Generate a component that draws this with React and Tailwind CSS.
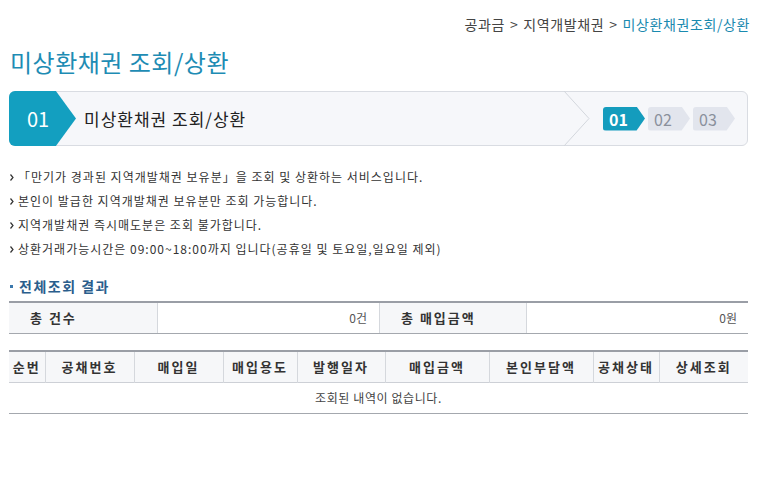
import React from 'react'

const font = { fontFamily: '"Noto Sans CJK KR", "Noto Sans", sans-serif' }

const notices = [
  '「만기가 경과된 지역개발채권 보유분」을 조회 및 상환하는 서비스입니다.',
  '본인이 발급한 지역개발채권 보유분만 조회 가능합니다.',
  '지역개발채권 즉시매도분은 조회 불가합니다.',
  '상환거래가능시간은 09:00~18:00까지 입니다(공휴일 및 토요일,일요일 제외)',
]

const columns = [
  { label: '순번', w: 'w-[36px]' },
  { label: '공채번호', w: 'w-[89px]' },
  { label: '매입일', w: 'w-[89px]' },
  { label: '매입용도', w: 'w-[74px]' },
  { label: '발행일자', w: 'w-[88px]' },
  { label: '매입금액', w: 'w-[104px]' },
  { label: '본인부담액', w: 'w-[104px]' },
  { label: '공채상태', w: 'w-[66px]' },
  { label: '상세조회', w: 'w-[89px]' },
]

const StepTag = ({ num, active }) => (
  <div
    className={`flex h-[24px] w-[42px] items-center pl-[6px] text-[16px] [clip-path:polygon(0_0,80%_0,100%_50%,80%_100%,0_100%)] rounded-l-[3px] ${
      active ? 'bg-[#149cbd] text-white font-semibold' : 'bg-[#e2e5ed] text-[#8a909c]'
    }`}
  >
    {num}
  </div>
)

export default function App() {
  return (
    <div className="w-[765px] min-h-[477px] bg-white pl-[9px] pr-[17px] text-[#333]" style={font}>
      {/* breadcrumb */}
      <div className="-mr-[2px] flex justify-end pt-[14px] text-[14px] leading-[20px] tracking-[0.6px] text-[#444]">
        <span>공과금</span>
        <span className="mx-[5px]">&gt;</span>
        <span>지역개발채권</span>
        <span className="mx-[5px]">&gt;</span>
        <span className="text-[#1a8aaf]">미상환채권조회/상환</span>
      </div>

      <h1 className="mt-[12px] pl-[1px] text-[24px] leading-[32px] tracking-[0.5px] text-[#1e8cb4]">미상환채권 조회/상환</h1>

      {/* step bar */}
      <div className="mt-[13px] flex h-[55px] items-center rounded-[6px] border border-[#d9dce2] bg-[#f6f7fa]">
        <div className="flex h-[55px] w-[67px] -ml-px shrink-0 items-center rounded-l-[6px] bg-[#139fc0] pl-[18px] text-[20px] text-white [clip-path:polygon(0_0,70%_0,100%_50%,70%_100%,0_100%)]">
          01
        </div>
        <div className="ml-[8px] flex-1 text-[17px] tracking-[1px] text-[#222]">미상환채권 조회/상환</div>
        <svg width="27" height="55" viewBox="0 0 27 55" className="shrink-0">
          <polyline points="1,0 26,27.5 1,55" fill="none" stroke="#d4d7dd" strokeWidth="1" />
        </svg>
        <div className="ml-[13px] mr-[12px] flex gap-[3px]">
          <StepTag num="01" active />
          <StepTag num="02" />
          <StepTag num="03" />
        </div>
      </div>

      {/* notices */}
      <ul className="mt-[19px] text-[12px] leading-[24px] tracking-[1px] text-[#333]">
        {notices.map((t) => (
          <li key={t} className="flex items-center">
            <svg width="4" height="7" viewBox="0 0 4 7" className="ml-[1px] mr-[4px] shrink-0">
              <polyline points="0.5,0.5 3,3.5 0.5,6.5" fill="none" stroke="#333" strokeWidth="1.2" />
            </svg>
            <span>{t}</span>
          </li>
        ))}
      </ul>

      {/* section title */}
      <div className="mt-[15px] flex items-center text-[14px] font-bold leading-[20px] tracking-[1.5px] text-[#2a5e8c]">
        <span className="ml-[1px] mr-[6px] h-[3px] w-[3px] bg-[#3b78ad]" />
        전체조회 결과
      </div>

      {/* summary */}
      <div className="mt-[5px] flex h-[33px] border-t-2 border-b border-t-[#9a9ea6] border-b-[#a4a8ae] text-[12px]">
        <div className="flex w-[148px] items-center bg-[#f6f7f9] pl-[21px] text-[13px] font-bold tracking-[2px] text-[#333]">총 건수</div>
        <div className="flex w-[223px] items-center justify-end border-x border-[#d5d8dd] pr-[12px] text-[#555]">0건</div>
        <div className="flex w-[146px] items-center bg-[#f6f7f9] pl-[21px] text-[13px] font-bold tracking-[2px] text-[#333]">총 매입금액</div>
        <div className="flex flex-1 items-center justify-end border-l border-[#d5d8dd] pr-[11px] text-[#555]">0원</div>
      </div>

      {/* result table */}
      <table className="mt-[16px] w-[739px] table-fixed border-collapse border-t-2 border-b border-t-[#9a9ea6] border-b-[#a4a8ae] text-[12px]">
        <thead>
          <tr className="h-[31px] bg-[#f6f7f9] border-b border-[#cdd0d6]">
            {columns.map((c, i) => (
              <th
                key={c.label}
                className={`${c.w} text-[13px] font-bold tracking-[2px] text-[#333] ${i > 0 ? 'border-l border-[#d5d8dd]' : ''}`}
              >
                {c.label}
              </th>
            ))}
          </tr>
        </thead>
        <tbody>
          <tr className="h-[31px]">
            <td colSpan={9} className="text-center tracking-[0.6px] text-[#444]">조회된 내역이 없습니다.</td>
          </tr>
        </tbody>
      </table>
    </div>
  )
}
